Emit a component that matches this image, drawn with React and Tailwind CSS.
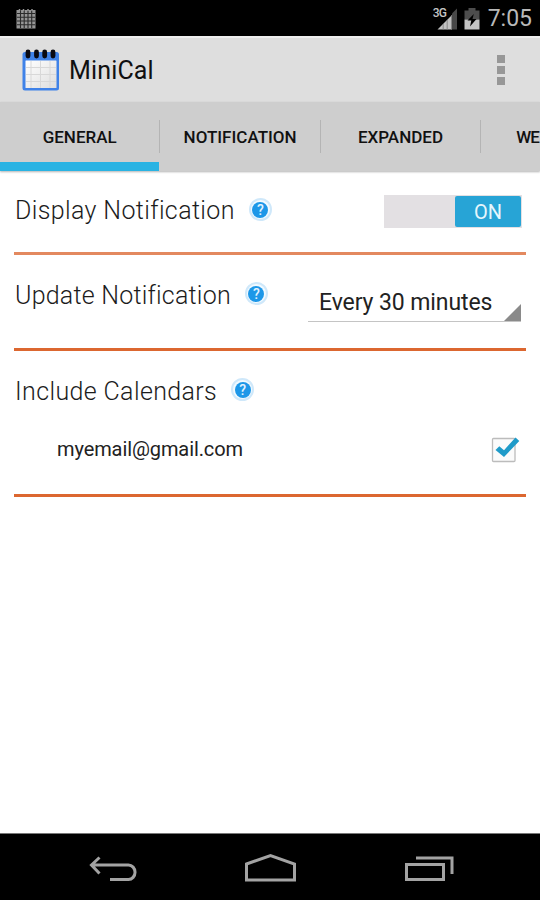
import React, { useState } from 'react';
import clsx from 'clsx';

const TABS = ['GENERAL', 'NOTIFICATION', 'EXPANDED', 'WE'];

const StatusBar = () => (
  <div className="flex h-9 shrink-0 items-center bg-black pl-[16px] pr-[8px]">
    <svg className="mt-[2px] h-5 w-5" viewBox="0 0 20 20" aria-hidden="true">
      <rect x="0.5" y="1" width="19" height="18.5" fill="#969696" />
      <path d="M4.5 1v18M8.2 1v18M12 1v18M15.7 1v18M1 4.5h18M1 8.2h18M1 12h18M1 15.7h18" stroke="#2b2b2b" strokeWidth="1.1" />
      <path d="M3.5 0v2M7.5 0v2M12 0v2M16 0v2" stroke="#969696" strokeWidth="1.5" />
    </svg>

    <div className="ml-auto flex items-center">
      {/* Mobile signal */}
      <div className="relative h-[23px] w-[24px]">
        <svg className="h-[23px] w-[24px]" viewBox="0 0 24 23" aria-hidden="true">
          <path d="M4.500 22.500L19 8v14.500z" fill="#c0c0c0" />
          <path d="M19 6.500L24 1.500v21H19z" fill="#484848" />
          <path d="M10.200 17v6M14.200 13v10M18.500 8v15" stroke="#777" strokeWidth="0.8" />
        </svg>
        <span className="absolute left-0 top-0 text-[12px] font-medium leading-[13px] tracking-[-0.8px] text-[#c4c4c4]">3G</span>
      </div>
      {/* Battery */}
      <svg className="ml-[7px] h-[23px] w-[16px]" viewBox="0 0 16 23" aria-hidden="true">
        <path d="M0.500 3.500h4V1h7V3.500h4v9h-15z" fill="#4d4d4d" />
        <path d="M0.500 12.500h15v10h-15z" fill="#c4c4c4" />
        <path d="M9.800 7L3.500 13.500h3.800L6 19.500l6.500-7.500H8.500z" fill="#000" />
      </svg>
      <span className="ml-[8px] pt-[2px] text-[23px] leading-9 text-[#b9b9b9]">7:05</span>
    </div>
  </div>
);

const CalendarLogo = () => (
  <svg className="h-[43px] w-[38px]" viewBox="0 0 38 43" aria-hidden="true">
    <defs>
      <linearGradient id="page" x1="0" y1="0" x2="1" y2="1">
        <stop offset="0" stopColor="#fff" />
        <stop offset="1" stopColor="#dedede" />
      </linearGradient>
    </defs>
    <rect x="0.500" y="3" width="36.500" height="38.500" rx="2.500" fill="#3f82e8" />
    <rect x="3.500" y="11.500" width="31" height="27.500" rx="0.500" fill="url(#page)" />
    <path d="M9 12v27M18.500 12v27M28 12v27M4 18.500h30M4 25.500h30M4 32.500h30" stroke="#d8d8d8" strokeWidth="1" />
    <path d="M6 3v4M14.500 3v4M22.700 3v4M31 3v4" stroke="#0a0a12" strokeWidth="4.800" strokeLinecap="round" />
  </svg>
);

const ActionBar = () => (
  <header className="flex h-[66px] shrink-0 items-center border-t-2 border-[#eeeeee] bg-[#dedede] pl-[22px] pr-[35px]">
    <CalendarLogo />
    <h1 className="ml-[9px] pt-[2px] text-[25px] leading-8 tracking-[0.15px] text-[#101010]">MiniCal</h1>
    <button className="ml-auto flex flex-col gap-[3px]" aria-label="More options">
      <span className="h-[8px] w-[8px] bg-[#979797]" />
      <span className="h-[8px] w-[8px] bg-[#979797]" />
      <span className="h-[8px] w-[8px] bg-[#979797]" />
    </button>
  </header>
);

const TabBar = ({ active, onChange }) => (
  <nav className="flex h-[69px] shrink-0 overflow-hidden bg-[#cecece] shadow-[0_1px_2px_rgba(0,0,0,0.3)]">
    {TABS.map((tab, index) => (
      <button
        key={tab}
        onClick={() => onChange(tab)}
        className={clsx('flex h-full flex-col', index < 3 ? 'w-[160.4px] shrink-0' : 'w-[60px] shrink-0')}
      >
        <span className="flex w-full flex-1 items-center">
          <span
            className={clsx(
              'flex-1 pt-[11px] text-[17px] font-medium whitespace-nowrap text-[#111]',
              index < 3 ? 'text-center' : 'pl-[35px] text-left tracking-[-0.8px]'
            )}
          >
            {tab}
          </span>
          {index < 3 && <span className="mt-[9px] h-[33px] w-px bg-[#b4b4b4]" />}
        </span>
        <span className={clsx('h-[9px] w-[159px]', tab === active && 'bg-[#29b3e3]')} />
      </button>
    ))}
  </nav>
);

const HelpIcon = () => (
  <span className="flex h-[23px] w-[23px] items-center justify-center rounded-full border-2 border-[#cfe8fa] bg-[#f2faff]">
    <span className="flex h-[16px] w-[16px] items-center justify-center rounded-full bg-[#1d97e8] text-[14px] font-medium leading-none text-[#e2f3ff]">?</span>
  </span>
);

const Label = ({ children, className }) => (
  <div className="flex h-8 items-center pl-px">
    <h2 className={clsx('text-[25px] font-light leading-8 text-[#1c1c1c]', className)}>{children}</h2>
    <div className="ml-[14px] mb-[3px]">
      <HelpIcon />
    </div>
  </div>
);

const CheckBox = ({ checked, onChange }) => (
  <button role="checkbox" aria-checked={checked} aria-label="Include calendar" onClick={onChange}>
    <svg className="mt-[2px] h-[28px] w-[30px]" viewBox="0 0 30 28">
      <rect x="1.500" y="2.500" width="22.500" height="23" rx="1" fill="#fbfbfb" stroke="#bcbcbc" strokeWidth="1.300" />
      {checked && <path d="M4.500 14l3.800-3.800 4.700 4L24.500 1.500l3.800 3.500L13 21z" fill="#1f9bc9" />}
    </svg>
  </button>
);

const NavigationBar = () => (
  <footer className="flex h-[67px] shrink-0 border-t border-[#777] bg-black">
    <svg className="h-[66px] w-full" viewBox="0 0 540 66" fill="none" stroke="#a3a3a3" strokeWidth="3">
      <path d="M91.500 31h37a6.500 7.200 0 0 1 0 14.500H110M99.500 23.500L91.500 31l8 8.500" />
      <path d="M246.500 30L270.500 21.500L294.500 30v16h-48z" />
      <path d="M406.500 30.500h37v15h-37zM416 24h36v16" />
    </svg>
  </footer>
);

const App = () => {
  const [activeTab, setActiveTab] = useState('GENERAL');
  const [notify, setNotify] = useState(true);
  const [included, setIncluded] = useState(true);

  return (
    <div className="flex h-[900px] w-[540px] flex-col overflow-hidden bg-white font-['Roboto',sans-serif]">
      <StatusBar />
      <ActionBar />
      <TabBar active={activeTab} onChange={setActiveTab} />

      <main className="flex-1 px-[14px]">
        {/* Display Notification */}
        <section className="flex h-[84px] justify-between border-b-3 border-[#e3895f] pt-[24px] pr-[4px]">
          <Label className="tracking-[0.37px]">Display Notification</Label>
          <button
            role="switch"
            aria-checked={notify}
            onClick={() => setNotify(!notify)}
            className={clsx('flex h-[33px] w-[138px] bg-[#e3e0e3] p-px', notify ? 'justify-end' : 'justify-start')}
          >
            <span className="flex h-[31px] w-[66px] items-center justify-center rounded-xs bg-[#27a4d6] pt-px text-[20px] leading-none text-[#e6f6fc]">
              {notify ? 'ON' : 'OFF'}
            </span>
          </button>
        </section>

        {/* Update Notification */}
        <section className="flex h-[96px] justify-between border-b-3 border-[#dc6730] pt-[24px] pr-[5px]">
          <Label className="pt-[2px] tracking-[0.22px]">Update Notification</Label>
          <div className="flex h-[43px] w-[213px] justify-between border-b border-[#c4c4c4]">
            <span className="pl-[11px] pt-[8px] text-[23px] leading-8 tracking-[-0.1px] whitespace-nowrap text-[#222]">Every 30 minutes</span>
            <svg className="h-[17px] w-[17px] self-end" viewBox="0 0 17 17">
              <path d="M17 0v17H0z" fill="#8a8a8a" />
            </svg>
          </div>
        </section>

        {/* Include Calendars */}
        <section className="h-[146px] border-b-3 border-[#dc6730] pt-[24px] pr-[5px]">
          <Label className="pt-[2px] tracking-[0.37px]">Include Calendars</Label>
          <div className="mt-[26px] flex h-8 items-center justify-between pl-[43px]">
            <span className="text-[20px] leading-8 tracking-[-0.1px] text-[#222]">myemail@gmail.com</span>
            <CheckBox checked={included} onChange={() => setIncluded(!included)} />
          </div>
        </section>
      </main>

      <NavigationBar />
    </div>
  );
};

export default App;
